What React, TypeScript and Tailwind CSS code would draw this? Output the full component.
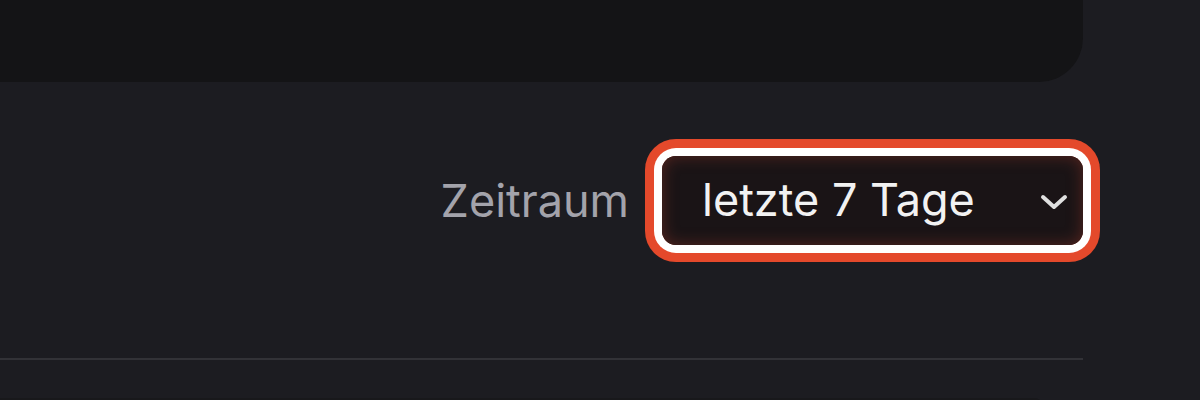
import React from "react";

export default function App() {
  return (
    <div
      className="w-[1200px] h-[400px] overflow-hidden bg-[#1c1c21]"
      style={{ fontFamily: "Inter, 'Noto Sans', sans-serif" }}
    >
      <div className="w-[1083px] flex flex-col">
        <div className="h-[82px] bg-[#141416] rounded-br-[44px]" />
        <div className="mt-[74px] flex items-center justify-end gap-[33px]">
          <label className="text-[45px] leading-none text-[#a3a3ab]">Zeitraum</label>
          <div className="relative w-[421px] h-[89px] rounded-[14px] shadow-[0_0_0_8px_#ffffff,0_0_0_17px_#e4492b]">
            <select
              defaultValue="7"
              className="appearance-none w-full h-full rounded-[14px] bg-[#1a1416] pl-[40px] pr-[60px] text-[45px] leading-[1.25] text-[#f2f2f2] outline-none shadow-[inset_0_0_16px_rgba(200,70,50,0.35)]"
              style={{ fontFamily: "Inter, 'Noto Sans', sans-serif" }}
            >
              <option value="7">letzte 7 Tage</option>
              <option value="30">letzte 30 Tage</option>
            </select>
            <svg
              className="pointer-events-none absolute right-[15px] top-[38px]"
              width="28"
              height="16"
              viewBox="0 0 28 16"
              fill="none"
            >
              <path d="M3 3 L14 13 L25 3" stroke="#e0e0e0" strokeWidth="4" strokeLinecap="round" strokeLinejoin="round" />
            </svg>
          </div>
        </div>
        <div className="mt-[113px] h-[2px] bg-[#323237]" />
        <div className="mt-[38px] w-[1044px] h-[10px] bg-[#18181b] rounded-tr-[20px]" />
      </div>
    </div>
  );
}
